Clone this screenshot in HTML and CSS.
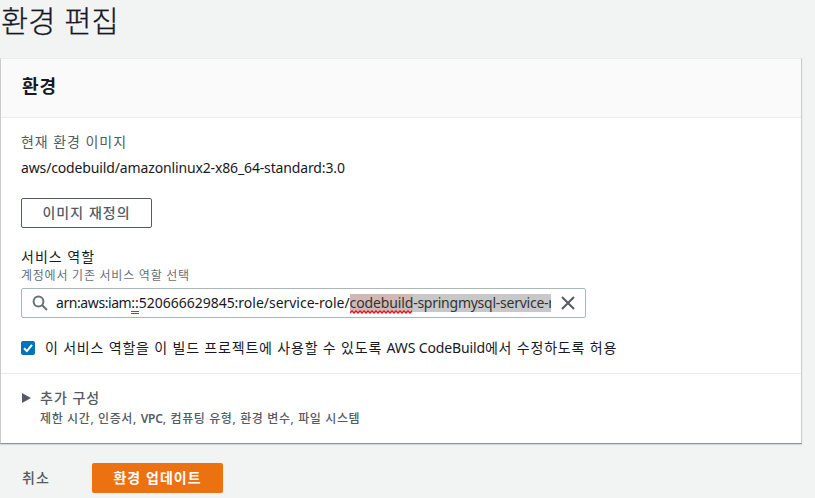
FILE: index.html
```html
<!DOCTYPE html>
<html lang="ko">
<head>
<meta charset="utf-8">
<title>환경 편집</title>
<link rel="stylesheet" href="styles.css">
</head>
<body>
<h1 class="page-title"><span>환경 편집</span></h1>
<main class="card">
  <header class="card-header"><h2><span>환경</span></h2></header>
  <section class="card-body">
    <div class="label"><span>현재 환경 이미지</span></div>
    <div class="value"><span>aws/codebuild/amazonlinux2-x86_64-standard:3.0</span></div>
    <button class="btn btn-normal"><span>이미지 재정의</span></button>
    <div class="field-label"><span>서비스 역할</span></div>
    <div class="hint"><span>계정에서 기존 서비스 역할 선택</span></div>
    <div class="search">
      <svg class="search-icon" viewBox="0 0 16 16"><circle cx="6.5" cy="6.5" r="4.9"/><path d="M10.2 10.2L15 15"/></svg>
      <div class="search-text"><span class="prefix">arn:aws:iam</span><span class="grammar">::</span>520666629845:role/service-role/<span class="selected"><span class="misspelled">codebuild<svg class="wave" viewBox="0 0 62 4"><path d="M0 3l2-2 2 2 2-2 2 2 2-2 2 2 2-2 2 2 2-2 2 2 2-2 2 2 2-2 2 2 2-2 2 2 2-2 2 2 2-2 2 2 2-2 2 2 2-2 2 2 2-2 2 2 2-2 2 2 2-2 2 2 2-2 2 2 2-2"/></svg></span><span class="rest">-springmysql-service-r</span></span></div>
      <svg class="clear-icon" viewBox="0 0 14 14"><path d="M1 1l12 12M13 1L1 13"/></svg>
    </div>
    <div class="check-row">
      <span class="checkbox"><svg viewBox="0 0 14 14"><path d="M3 7.2l2.9 2.9L11 3.8"/></svg></span>
      <span class="check-label">이 서비스 역할을 이 빌드 프로젝트에 사용할 수 있도록 <span class="latin">AWS CodeBuild</span>에서 수정하도록 허용</span>
    </div>
  </section>
  <section class="extra">
    <svg class="caret" viewBox="0 0 9 10"><path d="M0 0L9 5L0 10Z"/></svg>
    <div>
      <div class="extra-title"><span>추가 구성</span></div>
      <div class="extra-desc"><span>제한 시간, 인증서, <span class="latin strong">VPC</span>, 컴퓨팅 유형, 환경 변수, 파일 시스템</span></div>
    </div>
  </section>
</main>
<footer class="actions">
  <button class="btn btn-link"><span>취소</span></button>
  <button class="btn btn-primary"><span>환경 업데이트</span></button>
</footer>
</body>
</html>
```
FILE: styles.css
```css
* { box-sizing: border-box; }
body {
  margin: 0;
  width: 815px;
  height: 498px;
  overflow: hidden;
  background: #f2f3f3;
  color: #16191f;
  font: 14px/22px "Noto Sans", "Noto Sans CJK KR", sans-serif;
  white-space: nowrap;
}
h1, h2 { margin: 0; }
.page-title {
  height: 58px;
  padding: 0 0 0 1px;
  font-size: 29.5px;
  line-height: 39px;
  font-weight: 300;
  font-family: "Noto Sans CJK KR", sans-serif;
  letter-spacing: 0.2px;
  -webkit-text-stroke: 0.3px #16191f;
}
.card {
  width: 802px;
  height: 386px;
  background: #fff;
  border: 1px solid #c8cccc;
  border-top-color: #eaeded;
  border-bottom-color: #879596;
  box-shadow: 0 1px 1px #d5dbdb;
}
.card-header {
  height: 59px;
  padding: 13px 20px 0 21px;
  background: #fafafa;
  border-bottom: 1px solid #eaeded;
}
.card-header h2 { font-size: 18px; line-height: 28px; font-weight: 700; letter-spacing: 1px; }
.card-body { height: 255px; padding: 13px 20px 0; }
.label { color: #545b64; letter-spacing: 0.95px; }
.value { margin-top: 4px; letter-spacing: -0.14px; }
.btn {
  display: block;
  height: 30px;
  padding: 0;
  border: 1px solid transparent;
  border-radius: 2px;
  background: transparent;
  color: #545b64;
  font: 500 14px/24px "Noto Sans CJK KR", sans-serif;
  letter-spacing: 1px;
  white-space: nowrap;
}
.btn span { position: relative; top: -1px; }
.btn-normal { width: 131px; margin-top: 19px; background: #fff; border-color: #545b64; }
.field-label { margin-top: 19px; line-height: 20px; letter-spacing: 1px; }
.hint { font-size: 12px; line-height: 18px; color: #687078; letter-spacing: 0.76px; }
.search {
  display: flex;
  align-items: center;
  width: 565px;
  height: 30px;
  margin-top: 3px;
  padding-left: 10px;
  border: 1px solid #aab7b8;
  border-radius: 2px;
}
svg { display: block; fill: none; }
.search-icon { width: 16px; height: 16px; stroke: #687078; stroke-width: 2; }
.search-text {
  width: 495px;
  height: 24px;
  margin-left: 8px;
  line-height: 24px;
  letter-spacing: -0.02px;
  overflow: hidden;
}
.prefix { letter-spacing: -0.42px; }
.grammar { display: inline-block; height: 20px; line-height: 18px; border-bottom: 3px double #2f55ff; }
.selected { display: inline-block; height: 18px; line-height: 18px; background: #c8c8c8; color: #333; }
.misspelled { position: relative; display: inline-block; height: 18px; background: #d2b8b4; letter-spacing: -0.14px; }
.rest { letter-spacing: -0.25px; }
.wave { position: absolute; left: 0; bottom: -2px; width: 62px; height: 4px; stroke: #e81123; stroke-width: 1.4; }
.clear-icon { width: 14px; height: 14px; margin-left: 10px; stroke: #545b64; stroke-width: 2; }
.check-row { display: flex; align-items: center; margin-top: 19px; }
.checkbox { width: 14px; height: 14px; background: #0073bb; border-radius: 2px; }
.checkbox svg { stroke: #fff; stroke-width: 2; }
.check-label { margin-left: 10px; letter-spacing: 0.82px; }
.latin { letter-spacing: -0.14px; }
.strong { font-weight: 600; }
.extra {
  display: flex;
  height: 69px;
  padding: 13px 20px 0 21px;
  border-top: 1px solid #eaeded;
  color: #545b64;
}
.caret { width: 9px; height: 10px; margin: 6px 9px 0 0; fill: #545b64; }
.extra-title { font-weight: 500; letter-spacing: 1px; line-height: 21px; }
.extra-desc { font-size: 12px; line-height: 22px; font-weight: 500; letter-spacing: 0.62px; }
.actions { display: flex; padding: 19px 0 0 21px; }
.btn-link { width: 29px; }
.btn-primary { width: 131px; margin-left: 42px; background: #ec7211; color: #fff; font-weight: 700; }
```
